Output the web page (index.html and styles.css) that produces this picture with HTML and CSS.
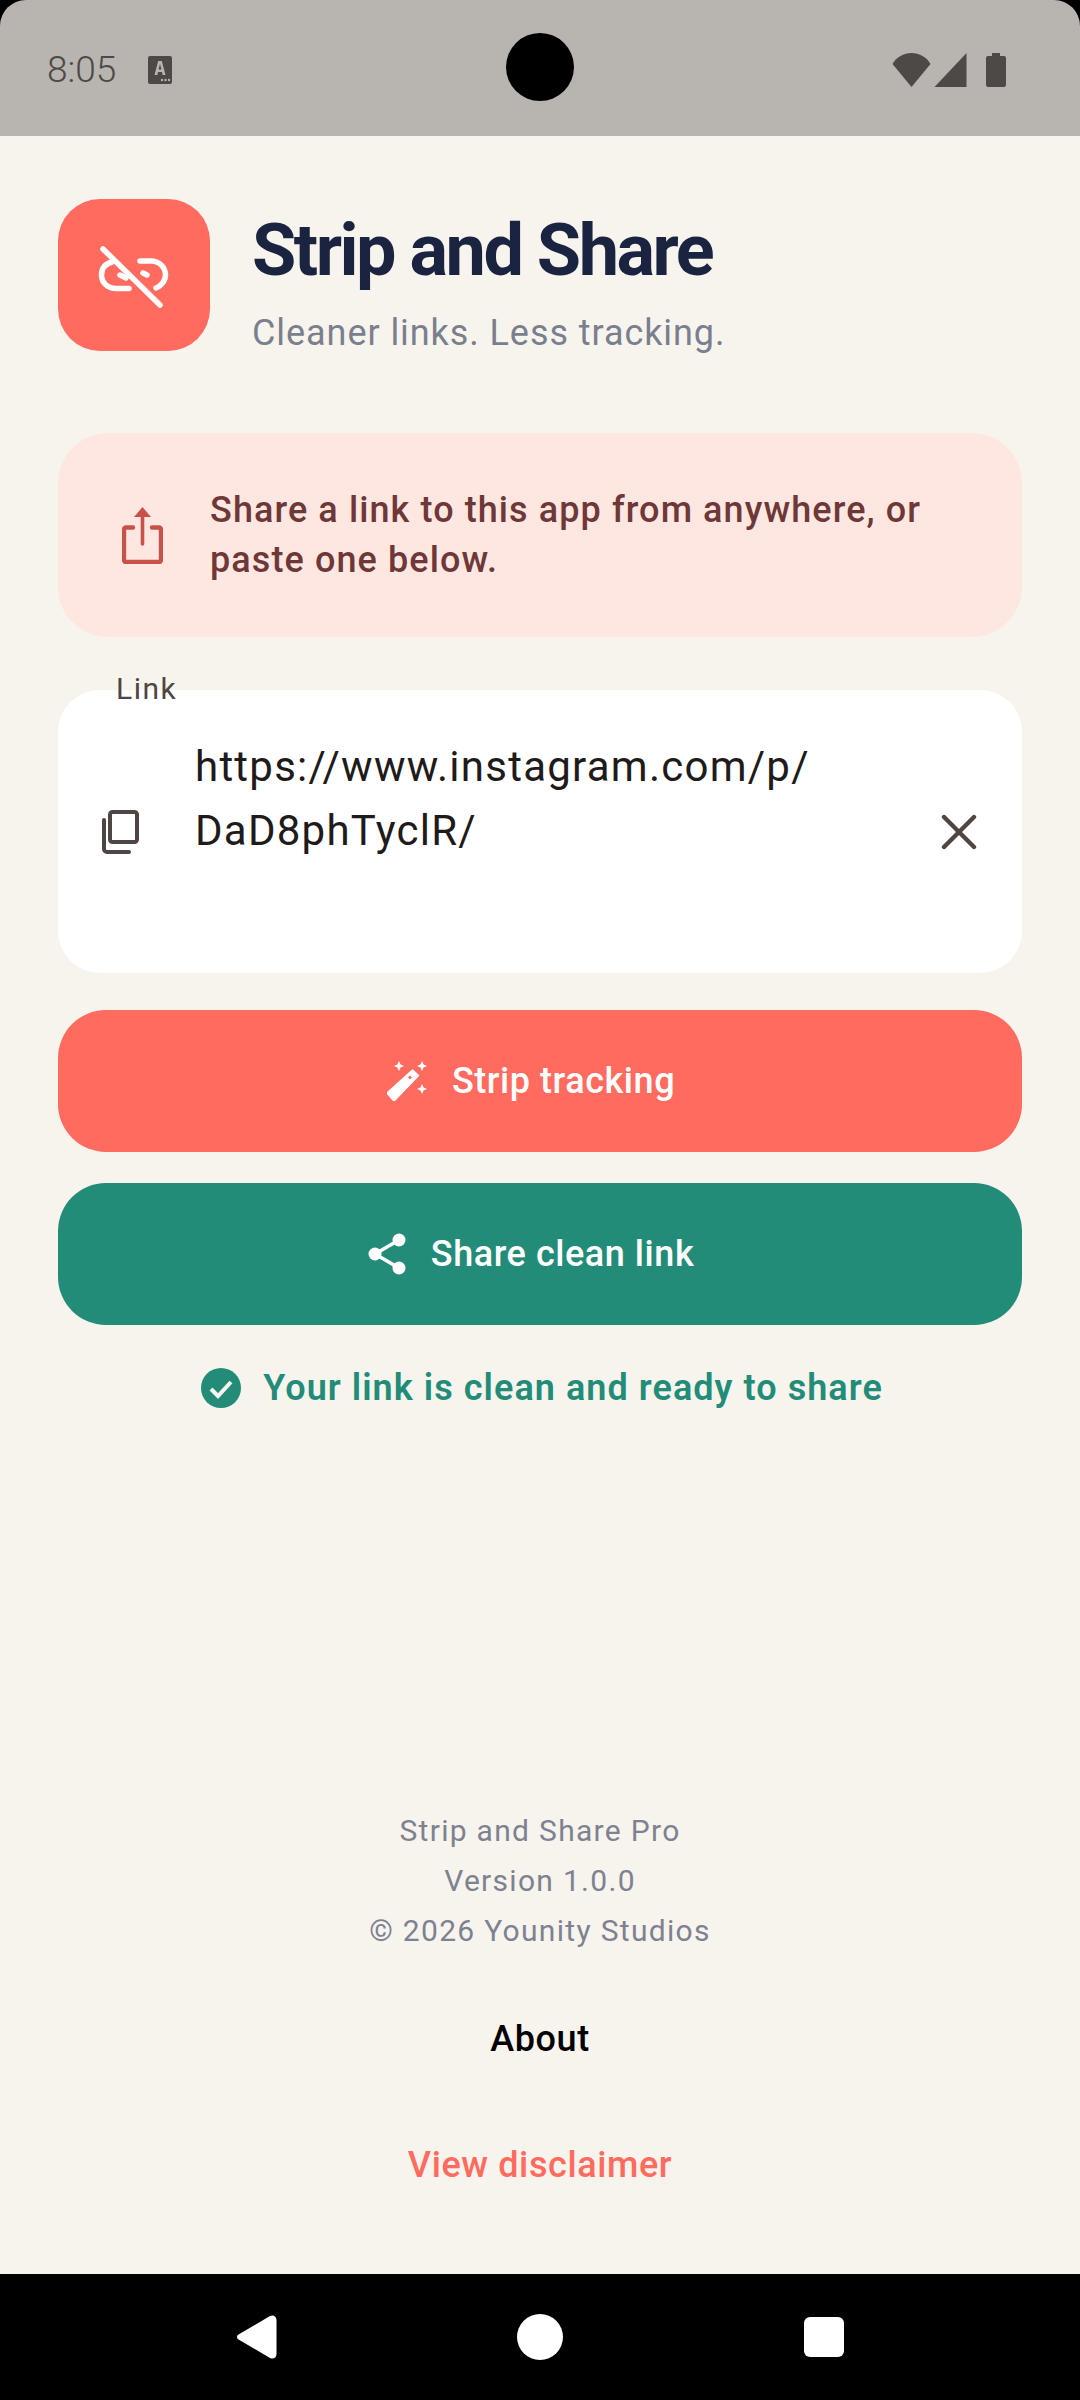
FILE: index.html
```html
<!DOCTYPE html>
<html lang="en">
<head>
<meta charset="utf-8">
<title>Strip and Share</title>
<link rel="stylesheet" href="styles.css">
</head>
<body>
<div class="screen">
  <header class="statusbar">
    <div class="status-left">
      <span class="clock">8:05</span>
      <svg class="notif" viewBox="0 0 24 28"><path fill="#4c4946" d="M2 0h20a2 2 0 0 1 2 2v24a2 2 0 0 1-2 2H2a2 2 0 0 1-2-2V2a2 2 0 0 1 2-2z"/><path fill="#b8b4b0" d="M10.200 5h3.600l3.700 14h-2.800l-.7-3H10l-.7 3H6.500zM10.600 13.500h2.800L12 8z"/><circle cx="14" cy="24" r="1.200" fill="#b8b4b0"/><circle cx="17.500" cy="24" r="1.200" fill="#b8b4b0"/><circle cx="21" cy="24" r="1.200" fill="#b8b4b0"/></svg>
    </div>
    <div class="camera"></div>
    <div class="status-right">
      <svg class="wifi" viewBox="0 0 38 34"><path fill="#4c4946" d="M0 11C4 4 11 0 19 0s15 4 19 11L19 34z"/></svg>
      <svg class="signal" viewBox="0 0 32 34"><path fill="#4c4946" d="M32 0v34H0z"/></svg>
      <svg class="battery" viewBox="0 0 20 34"><path fill="#4c4946" d="M6 0h8v3h4a2 2 0 0 1 2 2v27a2 2 0 0 1-2 2H2a2 2 0 0 1-2-2V5a2 2 0 0 1 2-2h4z"/></svg>
    </div>
  </header>

  <main class="content">
    <section class="brand">
      <div class="tile">
        <svg class="tile-icon" viewBox="0 0 72 72" fill="none" stroke="#fff" stroke-width="5.500" stroke-linecap="round">
          <path d="M5 10l57 56"/>
          <path d="M14 23C7 25 3.500 30 3.500 36 3.500 44 10 49.500 18 49.500H31"/>
          <path d="M22 36l6 3"/>
          <path d="M42 22H53C61 22 67.500 28 67.500 36 67.500 42 63 47 58 49"/>
          <path d="M45 34l4 2"/>
        </svg>
      </div>
      <div class="brand-text">
        <h1 class="title">Strip and Share</h1>
        <p class="subtitle">Cleaner links. Less tracking.</p>
      </div>
    </section>

    <section class="banner">
      <svg class="banner-icon" viewBox="0 0 41 57" fill="none" stroke="#c8524a" stroke-width="4.400">
        <path d="M11 20.500H4a2 2 0 0 0-2 2V53a2 2 0 0 0 2 2H37a2 2 0 0 0 2-2V22.500a2 2 0 0 0-2-2H30" stroke-linecap="round"/>
        <path d="M20.500 8V37" stroke-width="3.600" stroke-linecap="round"/>
        <path d="M20.500 0L29 10H12z" fill="#c8524a" stroke="none"/>
      </svg>
      <p class="banner-text">Share a link to this app from anywhere, or paste one below.</p>
    </section>

    <section class="field">
      <span class="field-label">Link</span>
      <svg class="copy-icon" viewBox="0 0 38 44" fill="none" stroke="#4f4543" stroke-width="4">
        <rect x="8" y="2" width="27" height="30" rx="2.500"/>
        <path d="M2 10v29a3 3 0 0 0 3 3h22" stroke-linecap="round"/>
      </svg>
      <div class="field-value">https://www.instagram.com/p/<br>DaD8phTyclR/</div>
      <svg class="clear-icon" viewBox="0 0 36 36" fill="none" stroke="#4f4543" stroke-width="4.400" stroke-linecap="round">
        <path d="M3 3l30 30M33 3L3 33"/>
      </svg>
    </section>

    <button class="action action-strip" type="button">
      <svg class="wand" viewBox="0 0 40 40" fill="#fff">
        <path d="M25.500 9l6 5.500L7 40 0 32z" stroke="#fff" stroke-width="1.500" stroke-linejoin="round"/>
        <path fill="#ff6b5e" d="M23 14.500l2 2-2 2-2-2z"/>
        <path d="M12 0l1.600 3.400L17 5l-3.400 1.600L12 10l-1.600-3.400L7 5l3.400-1.600zM35 0l1.600 3.400L40 5l-3.400 1.600L35 10l-1.600-3.400L30 5l3.400-1.600zM35 23l1.600 3.400L40 28l-3.400 1.600L35 33l-1.600-3.400L30 28l3.400-1.600z"/>
      </svg>
      <span>Strip tracking</span>
    </button>

    <button class="action action-share" type="button">
      <svg class="share" viewBox="0 0 38 42" fill="#fff">
        <circle cx="31" cy="7" r="6.500"/><circle cx="7" cy="21" r="6.500"/><circle cx="31" cy="35" r="6.500"/>
        <path d="M7 21L31 7M7 21l24 14" stroke="#fff" stroke-width="3.600"/>
      </svg>
      <span>Share clean link</span>
    </button>

    <div class="ready">
      <svg class="check" viewBox="0 0 40 40"><circle cx="20" cy="20" r="20" fill="#238c78"/><path d="M10 21l7 7 13-14" fill="none" stroke="#f7f4ee" stroke-width="4"/></svg>
      <span>Your link is clean and ready to share</span>
    </div>

    <footer class="foot">
      <div class="meta">
        <p>Strip and Share Pro</p>
        <p>Version 1.0.0</p>
        <p>© 2026 Younity Studios</p>
      </div>
      <a class="about">About</a>
      <a class="disclaimer">View disclaimer</a>
    </footer>
  </main>

  <nav class="navbar">
    <svg class="nav-back" viewBox="0 0 40 44"><path fill="#fff" d="M1.500 19.500L33 1c3-1.500 6.500 0 6.500 4v34c0 4-3.500 5.500-6.500 4L1.500 24.500c-2-1.200-2-3.800 0-5z"/></svg>
    <div class="nav-home"></div>
    <div class="nav-recent"></div>
  </nav>
</div>
</body>
</html>
```

FILE: styles.css
```css
* { box-sizing: border-box; }
html, body { margin: 0; padding: 0; background: #000; }
p, h1 { margin: 0; }

.screen {
  width: 1080px;
  height: 2400px;
  display: flex;
  flex-direction: column;
  background: #f7f4ee;
  font-family: Roboto, "Liberation Sans", sans-serif;
  overflow: hidden;
}

.statusbar {
  height: 136px;
  flex: none;
  display: flex;
  align-items: center;
  justify-content: space-between;
  padding: 3px 74px 0 47px;
  background: #b8b4b0;
  border-radius: 26px 26px 0 0;
  position: relative;
  box-shadow: 0 -30px 0 30px #000;
}
.status-left { display: flex; align-items: center; gap: 32px; }
.clock { font-size: 37px; color: #4c4946; font-weight: 300; }
.notif { width: 24px; height: 28px; display: block; }
.camera {
  position: absolute;
  left: 506px;
  top: 33px;
  width: 68px;
  height: 68px;
  border-radius: 50%;
  background: #000;
}
.status-right { display: flex; align-items: center; }
.wifi { width: 39px; height: 34px; display: block; }
.signal { width: 33px; height: 34px; margin-left: 3px; display: block; }
.battery { width: 20px; height: 34px; margin-left: 19px; display: block; }

.content {
  flex: 1;
  display: flex;
  flex-direction: column;
  padding: 63px 58px 0;
  min-height: 0;
}

.brand { display: flex; align-items: flex-start; gap: 42px; }
.tile {
  width: 152px;
  height: 152px;
  border-radius: 42px;
  background: #ff6b5e;
  display: flex;
  align-items: center;
  justify-content: center;
  flex: none;
}
.tile-icon { width: 72px; height: 72px; display: block; }
.brand-text { padding-top: 16px; }
.title {
  font-size: 72px;
  font-weight: 700;
  line-height: 72px;
  letter-spacing: -2.5px;
  color: #1a2340;
}
.subtitle {
  font-size: 36px;
  line-height: 36px;
  margin-top: 28px;
  color: #7a7f8e;
  letter-spacing: 0.93px;
}

.banner {
  margin-top: 82px;
  height: 204px;
  background: #ffe7e1;
  border-radius: 50px;
  display: flex;
  align-items: center;
  gap: 47px;
  padding: 0 60px 0 64px;
}
.banner-icon { width: 41px; height: 57px; flex: none; display: block; }
.banner-text {
  font-size: 36px;
  font-weight: 500;
  line-height: 50px;
  color: #6f3838;
  letter-spacing: 1.09px;
}

.field {
  margin-top: 53px;
  height: 283px;
  background: #fff;
  border-radius: 42px;
  position: relative;
  display: flex;
  align-items: center;
  padding: 0 45px 0 44px;
}
.field-label {
  position: absolute;
  left: 58px;
  top: -19px;
  font-size: 30px;
  line-height: 36px;
  color: #4f4543;
  letter-spacing: 1.5px;
}
.copy-icon { width: 38px; height: 44px; flex: none; display: block; }
.field-value {
  flex: 1;
  margin-left: 55px;
  align-self: flex-start;
  padding-top: 45px;
  font-size: 42px;
  line-height: 64px;
  color: #201a1a;
  letter-spacing: 1.25px;
}
.clear-icon { width: 36px; height: 36px; flex: none; display: block; }

.action {
  width: 100%;
  height: 142px;
  border: 0;
  border-radius: 48px;
  color: #fff;
  display: flex;
  align-items: center;
  justify-content: center;
  gap: 25px;
  font: 500 36px Roboto, "Liberation Sans", sans-serif;
  letter-spacing: 0.55px;
  padding: 0 18px 0 0;
}
.action-strip { margin-top: 37px; background: #ff6b5e; }
.action-share { margin-top: 31px; background: #238c78; }
.wand { width: 40px; height: 40px; display: block; }
.share { width: 38px; height: 42px; display: block; }

.ready {
  margin-top: 41px;
  display: flex;
  align-items: center;
  justify-content: center;
  gap: 22px;
  height: 44px;
  padding-left: 4px;
  font-size: 36px;
  font-weight: 600;
  color: #238c78;
  letter-spacing: 1.05px;
}
.check { width: 40px; height: 40px; display: block; }

.foot {
  margin-top: auto;
  padding-bottom: 84px;
  display: flex;
  flex-direction: column;
  align-items: center;
}
.meta {
  text-align: center;
  font-size: 30px;
  line-height: 50px;
  color: #7e8290;
  letter-spacing: 1.3px;
}
.about {
  margin-top: 58px;
  font-size: 36px;
  line-height: 50px;
  font-weight: 500;
  color: #000;
  letter-spacing: 0.6px;
}
.disclaimer {
  margin-top: 76px;
  font-size: 36px;
  line-height: 50px;
  font-weight: 500;
  color: #ff6b5e;
  letter-spacing: 0.6px;
}

.navbar {
  height: 126px;
  flex: none;
  background: #000;
  display: flex;
  align-items: center;
  justify-content: center;
}
.nav-back { width: 40px; height: 44px; display: block; margin-right: 240px; }
.nav-home { width: 46px; height: 46px; border-radius: 50%; background: #fff; margin-right: 241px; }
.nav-recent { width: 40px; height: 40px; border-radius: 6px; background: #fff; }
```
